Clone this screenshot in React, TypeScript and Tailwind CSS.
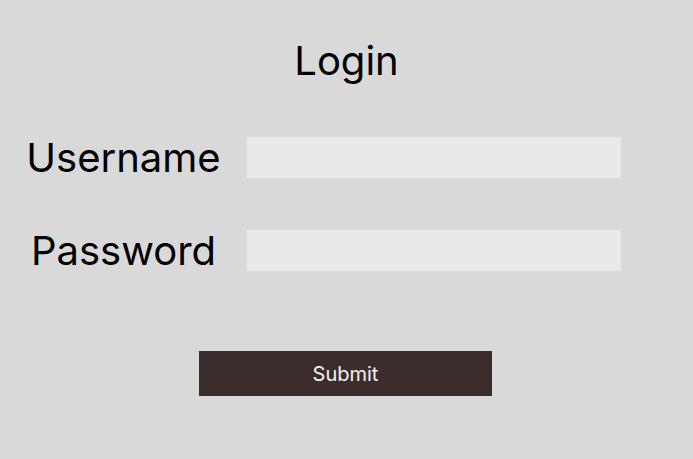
import React from 'react'

const Field = ({ label, type }: { label: string; type: string }) => (
  <div className="flex items-center h-[41px]">
    <label className="w-[247px] text-center text-[40px] leading-[41px] text-black">{label}</label>
    <input type={type} className="w-[374px] h-[41px] bg-[#e9e9e9] outline-none px-3 text-lg" />
  </div>
)

export default function App() {
  return (
    <div
      className="w-[693px] h-[459px] bg-[#d9d9d9] flex flex-col pt-[37px]"
      style={{ fontFamily: 'Inter, "Noto Sans", sans-serif' }}
    >
      <h1 className="text-center text-[40px] leading-[48px] text-black">Login</h1>
      <div className="flex flex-col gap-[52px] mt-[52px]">
        <Field label="Username" type="text" />
        <Field label="Password" type="password" />
      </div>
      <button className="mt-[80px] ml-[199px] w-[293px] h-[45px] bg-[#3c2d2d] text-[#f2f2f2] text-[20px]">
        Submit
      </button>
    </div>
  )
}
